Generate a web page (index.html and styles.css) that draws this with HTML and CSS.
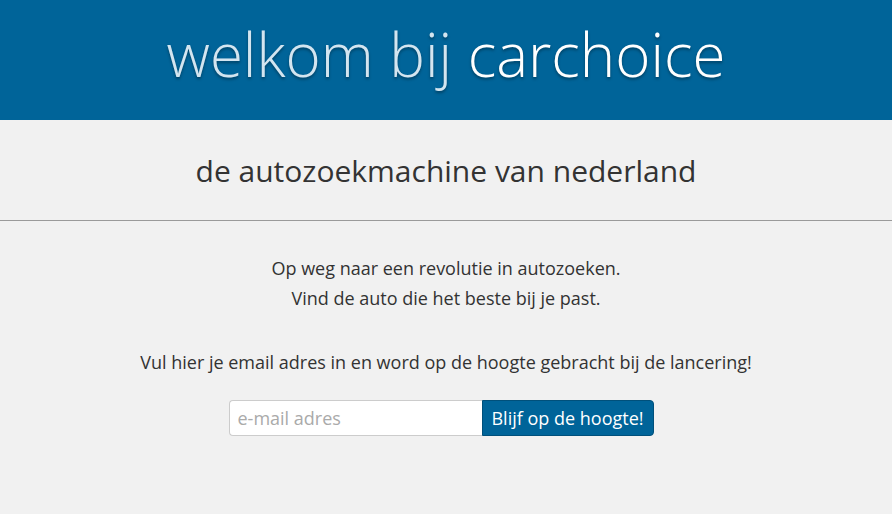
FILE: index.html
```html
<!DOCTYPE html>
<html lang="nl">
<head>
    <meta charset="UTF-8">
    <meta name="viewport" content="width=device-width, initial-scale=1.0">
    <title>carchoice</title>
    <link rel="stylesheet" href="styles.css">
</head>
<body>
    <header>
        <h1><span class="dim">welkom bij</span> carchoice</h1>
    </header>
    <section class="tagline">
        <h2>de autozoekmachine van nederland</h2>
    </section>
    <main>
        <p>Op weg naar een revolutie in autozoeken.<br>Vind de auto die het beste bij je past.</p>
        <p class="cta">Vul hier je email adres in en word op de hoogte gebracht bij de lancering!</p>
        <form class="signup" onsubmit="return false">
            <input type="email" placeholder="e-mail adres">
            <button type="submit">Blijf op de hoogte!</button>
        </form>
    </main>
</body>
</html>
```

FILE: styles.css
```css
body {
    margin: 0;
    padding: 0;
    font-family: "Open Sans", sans-serif;
    background-color: #f1f1f1;
    color: #333;
}
header {
    background-color: #006499;
    height: 120px;
    box-sizing: border-box;
    padding-bottom: 12px;
    display: flex;
    align-items: center;
    justify-content: center;
}
header h1 {
    margin: 0;
    font-size: 60px;
    font-weight: 300;
    color: #fff;
    text-shadow: 0 2px 3px rgba(0, 0, 0, 0.35);
}
header .dim {
    color: #d3e5f0;
}
.tagline {
    border-bottom: 1px solid #9a9a9a;
    height: 101px;
    box-sizing: border-box;
    display: flex;
    align-items: center;
    justify-content: center;
}
.tagline h2 {
    margin: 0;
    font-size: 30px;
    font-weight: 400;
    color: #333;
}
main {
    text-align: center;
    padding-top: 32px;
    font-size: 18px;
    line-height: 30px;
}
main p {
    margin: 0;
}
.cta {
    margin-top: 34px !important;
}
.signup {
    display: flex;
    justify-content: center;
    margin-top: 23px;
    padding-right: 10px;
}
.signup input {
    width: 253px;
    height: 36px;
    box-sizing: border-box;
    border: 1px solid #ccc;
    border-right: none;
    border-radius: 4px 0 0 4px;
    padding: 0 8px;
    font-family: "Open Sans", sans-serif;
    font-size: 18px;
    color: #333;
    background: #fff;
    outline: none;
}
.signup input::placeholder {
    color: #aaa;
}
.signup button {
    width: 172px;
    height: 36px;
    box-sizing: border-box;
    border: 1px solid #00507b;
    border-radius: 0 4px 4px 0;
    background-color: #006499;
    color: #fff;
    font-family: "Open Sans", sans-serif;
    font-size: 18px;
    padding: 0 6px;
    cursor: pointer;
}
```
